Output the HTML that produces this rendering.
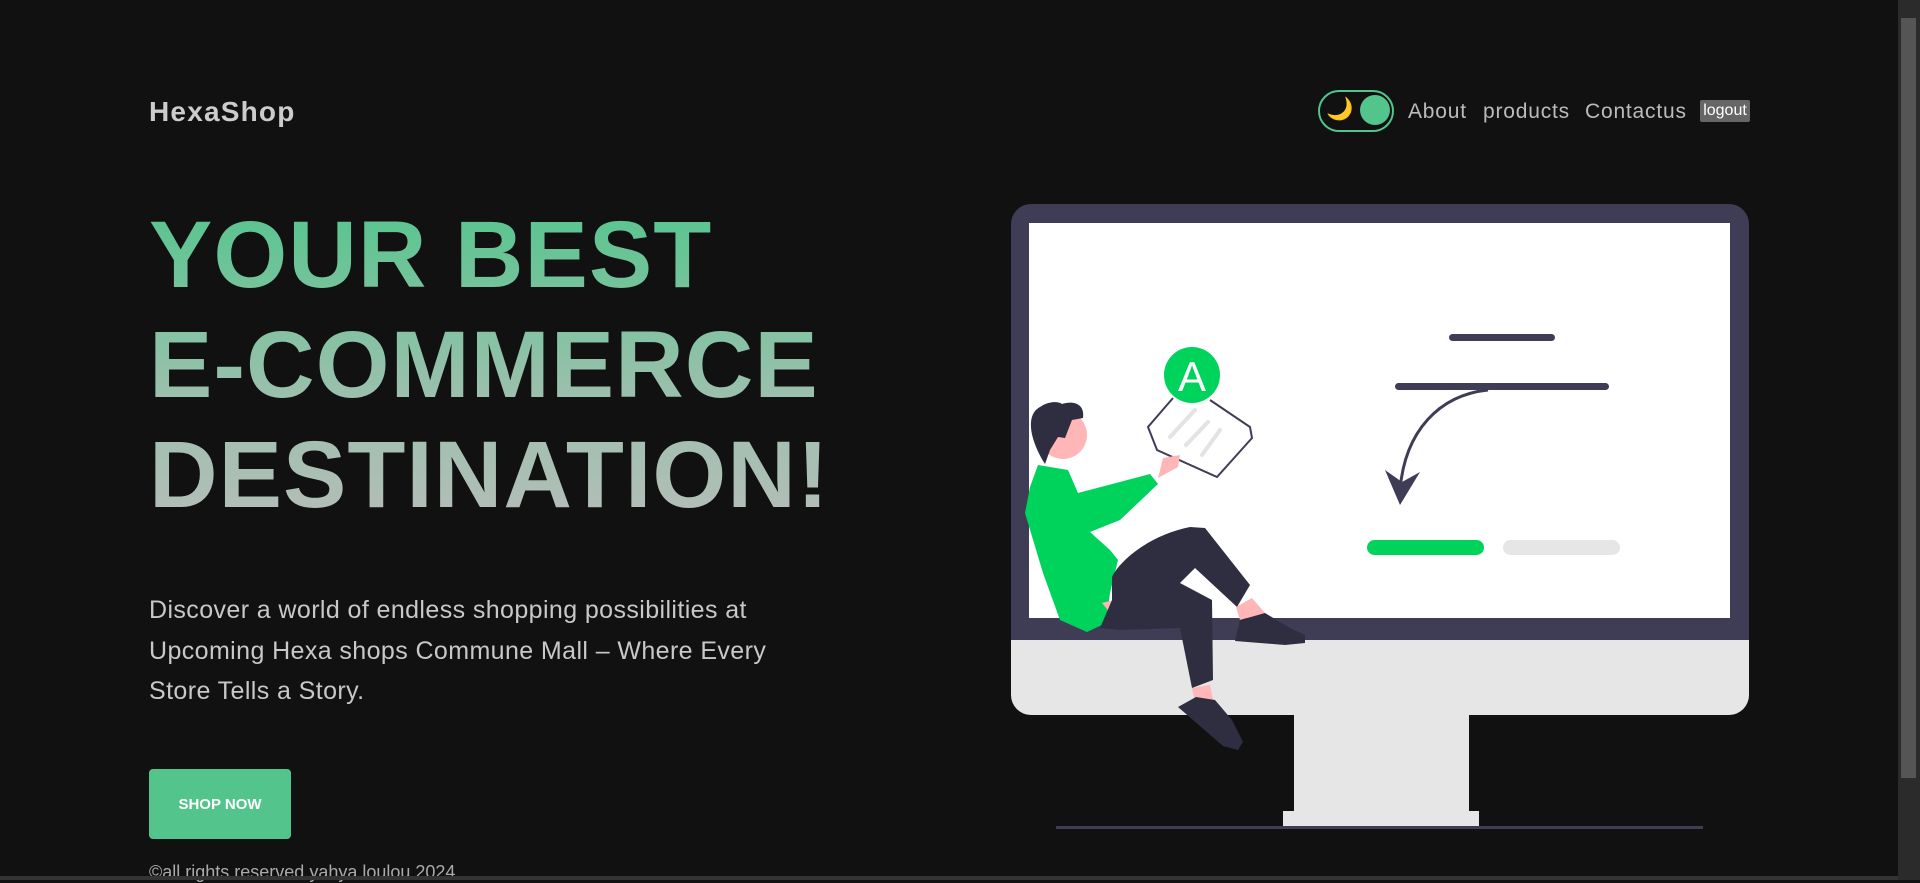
<!DOCTYPE html>
<html><head><meta charset="utf-8"><style>
html,body{margin:0;padding:0;background:#111;width:1920px;height:880px;overflow:hidden;font-family:"Liberation Sans",sans-serif}
.abs{position:absolute}
.logo{left:149px;top:96px;font-size:28px;font-weight:bold;color:#ccc;letter-spacing:1.2px}
.nav a{position:absolute;top:100px;font-size:21px;color:#bbb;text-decoration:none;letter-spacing:0.8px}
.h1{left:149px;top:200px;font-size:95px;font-weight:900;line-height:110px;letter-spacing:1px;background:linear-gradient(180deg,#55c58d 0%,#9cc0ad 60%,#b5beb9 100%);-webkit-background-clip:text;background-clip:text;color:transparent}
.p{left:149px;top:590px;font-size:25px;line-height:40.5px;color:#c8c8c8;width:670px;letter-spacing:0.4px}
.btn{left:149px;top:769px;width:142px;height:70px;background:#52c48c;border-radius:4px;color:#fff;font-weight:bold;font-size:15px;display:flex;align-items:center;justify-content:center}
.foot{left:149px;top:862px;font-size:18px;color:#aaa}
</style></head><body>
<div class="abs logo">HexaShop</div>
<div class="abs" style="left:1318px;top:90px;width:72px;height:38px;border:2px solid #52c48c;border-radius:21px"></div>
<div class="abs" style="left:1326px;top:96px;font-size:22px">🌙</div>
<div class="abs" style="left:1360px;top:95px;width:30px;height:30px;border-radius:50%;background:#52c48c"></div>
<div class="nav"><a style="left:1408px">About</a><a style="left:1483px">products</a><a style="left:1585px">Contactus</a></div>
<div class="abs" style="left:1700px;top:100px;width:50px;height:22px;background:#666;border-radius:2px;color:#fff;font-size:16px;text-align:center;line-height:22px">logout</div>
<div class="abs h1">YOUR BEST<br>E-COMMERCE<br>DESTINATION!</div>
<div class="abs p">Discover a world of endless shopping possibilities at Upcoming Hexa shops Commune Mall – Where Every Store Tells a Story.</div>
<div class="abs btn">SHOP NOW</div>
<div class="abs foot">©all rights reserved yahya loulou 2024</div>
<svg class="abs" style="left:0;top:0" width="1920" height="880" viewBox="0 0 1920 880">
<rect x="1011" y="204" width="738" height="511" rx="20" fill="#3f3d56"/>
<path d="M1011 640H1749V695a20 20 0 0 1-20 20H1031a20 20 0 0 1-20-20Z" fill="#e6e6e6"/>
<rect x="1029" y="223" width="701" height="395" fill="#fff"/>
<rect x="1294" y="715" width="175" height="96" fill="#e6e6e6"/>
<rect x="1283" y="811" width="196" height="16" fill="#e6e6e6"/>
<rect x="1056" y="826" width="647" height="3" fill="#3f3d56"/>
<rect x="1449" y="334" width="106" height="7" rx="3.5" fill="#3f3d56"/>
<rect x="1395" y="383" width="214" height="7" rx="3.5" fill="#3f3d56"/>
<path d="M1488 390C1440 395 1405 430 1400 490" stroke="#3f3d56" stroke-width="3" fill="none"/>
<path d="M1385 470L1400 505L1420 472L1402 482Z" fill="#3f3d56"/>
<rect x="1367" y="540" width="117" height="15" rx="7.5" fill="#00d35c"/>
<rect x="1503" y="540" width="117" height="15" rx="7.5" fill="#e6e6e6"/>
<path d="M1173 398L1148 427L1157 450L1217 477L1252 438L1250 427L1210 400" fill="#fff" stroke="#3f3d56" stroke-width="2"/>
<path d="M1170 437L1195 410M1186 445L1208 422M1202 455L1220 430" stroke="#e3e3e3" stroke-width="4" stroke-linecap="round"/>
<circle cx="1192" cy="375" r="28" fill="#00d35c"/>
<text x="1192" y="391" font-size="42" fill="#fff" text-anchor="middle" font-family="Liberation Sans">A</text>
<path d="M1163 458L1180 455L1178 467L1158 478Z" fill="#ffb6b6"/>
<circle cx="1063" cy="435" r="24" fill="#ffb6b6"/>
<path d="M1045 464C1030 440 1025 415 1040 407C1050 400 1060 402 1062 404C1075 400 1085 405 1083 418L1072 420L1065 438L1058 437L1050 450Z" fill="#2f2e41"/>
<path d="M1038 465L1068 470L1078 493L1150 474L1158 484L1120 520L1090 532L1110 550L1118 560L1110 593L1106 623L1087 632L1060 620L1043 573L1025 513L1030 487Z" fill="#00d35c"/>
<path d="M1102 603L1120 625L1125 617L1114 600Z" fill="#ffb6b6"/>
<path d="M1112 577C1120 560 1150 535 1190 527L1205 528L1250 585L1237 607L1195 568L1180 583L1212 600L1213 680L1192 688L1180 628L1120 630L1100 628L1112 600Z" fill="#2f2e41"/>
<path d="M1236 607L1252 598L1265 613L1240 620Z M1192 688L1210 685L1214 705L1196 707Z" fill="#ffb6b6"/>
<path d="M1240 620L1265 613L1290 628L1305 635L1305 643L1285 645L1235 641Z" fill="#2f2e41"/>
<path d="M1196 697L1215 700L1232 720L1243 742L1238 750L1223 746L1178 707Z" fill="#2f2e41"/>
<rect x="1898" y="0" width="22" height="880" fill="#2b2b2b"/>
<rect x="1901" y="18" width="15" height="760" fill="#555"/>
<rect x="0" y="876" width="1898" height="4" fill="#333"/>
</svg>
</body></html>
